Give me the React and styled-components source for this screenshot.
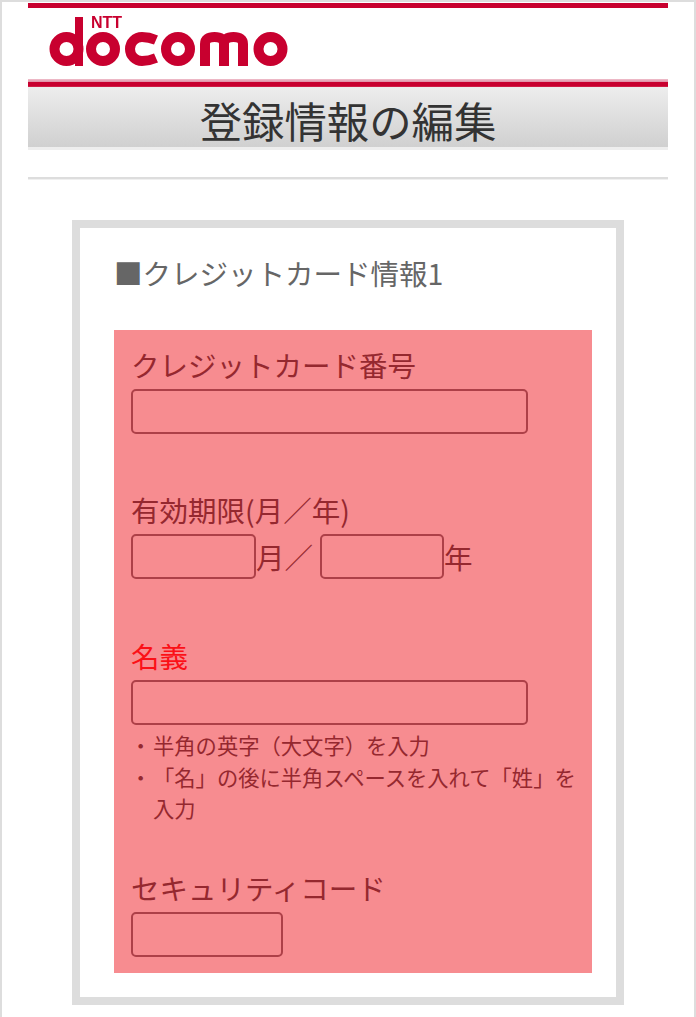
import React from "react";
import styled, { createGlobalStyle } from "styled-components";

const GlobalStyle = createGlobalStyle`
  html, body {
    margin: 0;
    padding: 0;
    background: #ffffff;
  }
  body {
    font-family: "Noto Sans CJK JP", "Noto Sans", sans-serif;
    text-spacing-trim: space-all;
  }
`;

const Page = styled.div`
  box-sizing: border-box;
  width: 696px;
  height: 1017px;
  overflow: hidden;
  border: 2px solid #dddddd;
  border-bottom: 0;
  padding: 1px 26px 0;
`;

const TopBar = styled.div`
  height: 5px;
  background: #c8002f;
`;

const LogoRow = styled.div`
  height: 71px;
  padding: 2px 0 0 20px;
  box-sizing: border-box;
  background: #fff;
`;

const LogoMark = styled.svg`
  display: block;
  filter: blur(0.5px);
`;

const RedRule = styled.div`
  height: 8px;
  background: linear-gradient(#efc0cc 0, #e08ca3 3px, #c8002f 3px, #c8002f 7px, #d43a5c 8px);
`;

const TitleBar = styled.h1`
  margin: 0;
  height: 63px;
  box-sizing: border-box;
  border-bottom: 3px solid #eeeeee;
  background: linear-gradient(#ededed, #d0d0d0);
  color: #333;
  font-size: 42.4px;
  font-weight: 400;
  line-height: 65px;
  text-align: center;
`;

const Divider = styled.div`
  height: 3px;
  box-sizing: border-box;
  margin-top: 27px;
  background: #dddddd;
  border-bottom: 1px solid #f0f0f0;
`;

const Card = styled.section`
  box-sizing: border-box;
  width: 552px;
  height: 785px;
  margin: 40px 0 0 44px;
  border: 8px solid #dddddd;
  padding: 0 24px 0 34px;
`;

const CardTitle = styled.h2`
  margin: 0;
  height: 102px;
  padding-top: 25px;
  box-sizing: border-box;
  color: #666;
  font-size: 28.5px;
  font-weight: 400;
  line-height: 40px;
`;

const FormPanel = styled.div`
  box-sizing: border-box;
  width: 478px;
  height: 643px;
  background: #f78c90;
  padding: 14px 0 0 17px;
  color: #95282f;
`;

const Field = styled.div`
  height: ${(p) => p.$height}px;
`;

const Label = styled.div`
  font-size: 28.5px;
  line-height: 42px;
  padding-bottom: 3px;
  color: ${(p) => (p.$error ? "#fb1017" : "#95282f")};
`;

const TextBox = styled.div`
  box-sizing: border-box;
  width: ${(p) => p.$width}px;
  height: 45px;
  border: 2px solid #ad4048;
  border-radius: 5px;
`;

const InlineRow = styled.div`
  display: flex;
  align-items: center;
  font-size: 28.5px;
  line-height: 45px;
`;

const Separator = styled.span`
  width: 64px;
  flex: none;
`;

const Notes = styled.ul`
  list-style: none;
  margin: 4px 0 0;
  padding: 0;
  width: 456px;
  font-size: 21.3px;
  line-height: 31.5px;
`;

const Note = styled.li`
  position: relative;
  padding-left: 22px;

  &::before {
    content: "・";
    position: absolute;
    left: -1px;
    top: 0;
    width: 20px;
  }
`;

const Logo = () => (
  <LogoMark width="244" height="60" viewBox="0 -6 244 60" aria-label="NTT docomo">
    <g fill="none" stroke="#c8002f" strokeWidth="10">
      <circle cx="18.5" cy="33" r="12" />
      <circle cx="55" cy="33" r="12" />
      <path d="M108 24 Q101 21 94 21 A12 12 0 0 0 94 45 Q101 45 108 42" />
      <circle cx="130" cy="33" r="12" />
      <path d="M157 50 V28 Q157 21 166.5 21 Q176 21 176 28 V50 M176 28 Q176 21 185.5 21 Q195 21 195 28 V50" />
      <circle cx="222.5" cy="33" r="12" />
    </g>
    <rect x="27" y="1" width="8" height="49" fill="#c8002f" />
    <text
      x="43"
      y="12"
      fill="#c8002f"
      fontFamily="Liberation Sans"
      fontWeight="700"
      fontSize="16"
    >
      NTT
    </text>
  </LogoMark>
);

export default function App() {
  return (
    <>
      <GlobalStyle />
      <Page>
        <TopBar />
        <LogoRow>
          <Logo />
        </LogoRow>
        <RedRule />
        <TitleBar>登録情報の編集</TitleBar>
        <Divider />
        <Card>
          <CardTitle>■クレジットカード情報1</CardTitle>
          <FormPanel>
            <Field $height={145}>
              <Label>クレジットカード番号</Label>
              <TextBox $width={397} />
            </Field>
            <Field $height={146}>
              <Label>有効期限(月／年)</Label>
              <InlineRow>
                <TextBox $width={125} />
                <Separator>月／</Separator>
                <TextBox $width={124} />
                <span>年</span>
              </InlineRow>
            </Field>
            <Field $height={232}>
              <Label $error>名義</Label>
              <TextBox $width={397} />
              <Notes>
                <Note>半角の英字（大文字）を入力</Note>
                <Note>「名」の後に半角スペースを入れて「姓」を入力</Note>
              </Notes>
            </Field>
            <Field $height={104}>
              <Label>セキュリティコード</Label>
              <TextBox $width={152} />
            </Field>
          </FormPanel>
        </Card>
      </Page>
    </>
  );
}
